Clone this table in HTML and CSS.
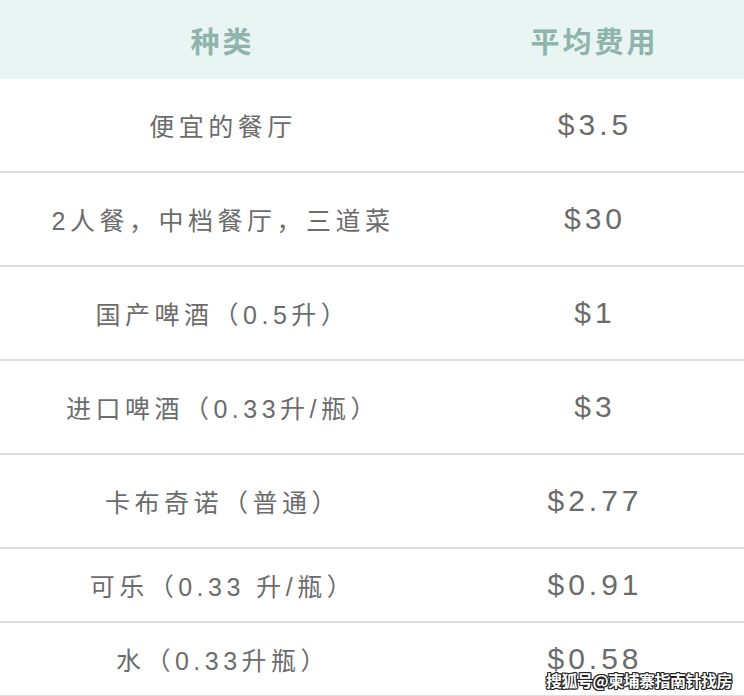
FILE: index.html
```html
<!DOCTYPE html>
<html lang="zh">
<head>
<meta charset="utf-8">
<link rel="stylesheet" href="styles.css">
</head>
<body>
<div class="table">
  <div class="head">
    <div class="cell">种类</div>
    <div class="cell">平均费用</div>
  </div>
  <div class="row">
    <div class="cell name">便宜的餐厅</div>
    <div class="cell price">$3.5</div>
  </div>
  <div class="row">
    <div class="cell name">2人餐，中档餐厅，三道菜</div>
    <div class="cell price">$30</div>
  </div>
  <div class="row">
    <div class="cell name">国产啤酒（0.5升）</div>
    <div class="cell price">$1</div>
  </div>
  <div class="row">
    <div class="cell name">进口啤酒（0.33升/瓶）</div>
    <div class="cell price">$3</div>
  </div>
  <div class="row">
    <div class="cell name">卡布奇诺（普通）</div>
    <div class="cell price">$2.77</div>
  </div>
  <div class="row short">
    <div class="cell name">可乐（0.33 升/瓶）</div>
    <div class="cell price">$0.91</div>
  </div>
  <div class="row short">
    <div class="cell name">水（0.33升瓶）</div>
    <div class="cell price">$0.58</div>
  </div>
  <div class="watermark">搜狐号@柬埔寨指南针找房</div>
</div>
</body>
</html>
```
FILE: styles.css
```css
html, body {
  margin: 0;
  padding: 0;
  background: #ffffff;
}
body {
  width: 744px;
  height: 696px;
  overflow: hidden;
  font-family: "Liberation Sans", "Noto Sans CJK SC", sans-serif;
}
.table {
  position: relative;
  width: 744px;
}
.head, .row {
  display: grid;
  grid-template-columns: 442px 1fr;
  align-items: center;
}
.head {
  height: 79px;
  background: #e9f5f2;
  color: #8fb4ab;
  font-family: "Noto Sans CJK SC", sans-serif;
  font-weight: 700;
  font-size: 29px;
  letter-spacing: 3px;
}
.cell {
  text-align: center;
  white-space: nowrap;
}
.head .cell {
  padding-left: 3px;
}
.row {
  height: 92px;
  border-bottom: 2px solid #dedede;
}
.row.short {
  height: 72px;
}
.name {
  color: #6c6c6c;
  font-size: 25px;
  letter-spacing: 4.5px;
  padding-left: 4px;
}
.price {
  color: #6b6b6b;
  font-size: 30px;
  letter-spacing: 4px;
  padding-left: 4px;
}
.watermark {
  position: absolute;
  right: 12px;
  bottom: 5px;
  color: #ffffff;
  font-family: "Noto Sans CJK SC", sans-serif;
  font-weight: 700;
  font-size: 16px;
  letter-spacing: -0.5px;
  text-shadow: 1px 1px 0 #222, -1px -1px 0 #222, 1px -1px 0 #222, -1px 1px 0 #222, 0 1px 0 #222, 1px 0 0 #222, 0 -1px 0 #222, -1px 0 0 #222;
}
```
